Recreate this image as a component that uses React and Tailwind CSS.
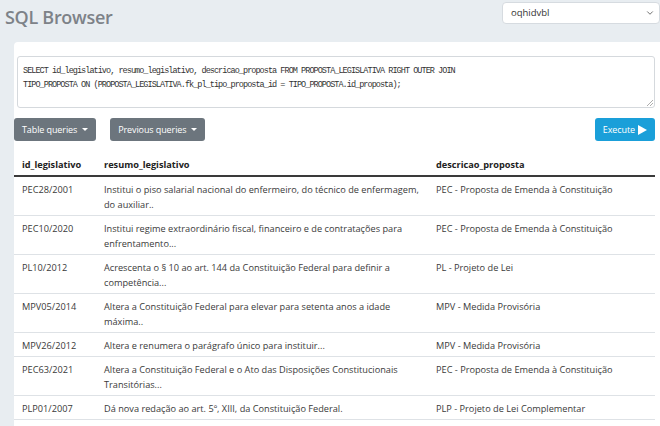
import { ChevronDown } from 'lucide-react'

const rows = [
  { id: 'PEC28/2001', resumo: ['Institui o piso salarial nacional do enfermeiro, do técnico de enfermagem,', 'do auxiliar..'], desc: 'PEC - Proposta de Emenda à Constituição' },
  { id: 'PEC10/2020', resumo: ['Institui regime extraordinário fiscal, financeiro e de contratações para', 'enfrentamento...'], desc: 'PEC - Proposta de Emenda à Constituição' },
  { id: 'PL10/2012', resumo: ['Acrescenta o § 10 ao art. 144 da Constituição Federal para definir a', 'competência...'], desc: 'PL - Projeto de Lei' },
  { id: 'MPV05/2014', resumo: ['Altera a Constituição Federal para elevar para setenta anos a idade', 'máxima..'], desc: 'MPV - Medida Provisória' },
  { id: 'MPV26/2012', resumo: ['Altera e renumera o parágrafo único para instituir...'], desc: 'MPV - Medida Provisória' },
  { id: 'PEC63/2021', resumo: ['Altera a Constituição Federal e o Ato das Disposições Constitucionais', 'Transitórias...'], desc: 'PEC - Proposta de Emenda à Constituição' },
  { id: 'PLP01/2007', resumo: ['Dá nova redação ao art. 5º, XIII, da Constituição Federal.'], desc: 'PLP - Projeto de Lei Complementar' },
]

function DropButton({ label }) {
  return (
    <button className="flex items-center gap-[5px] h-[23px] px-[8px] rounded-[3px] bg-[#6c757d] text-white text-[9px] tracking-[-0.1px]">
      {label}
      <span className="w-0 h-0 border-l-[3px] border-r-[3px] border-t-[3px] border-l-transparent border-r-transparent border-t-white" />
    </button>
  )
}

export default function App() {
  return (
    <div className="w-[660px] h-[426px] overflow-hidden bg-[#e8edf1] font-['Open_Sans',sans-serif] text-[#333]">
      {/* Top bar */}
      <div className="flex items-start justify-between h-[42px]">
        <h1 className="ml-[5px] mt-[4px] text-[18px] font-semibold text-[#7d8288] tracking-[-0.3px]">SQL Browser</h1>
        <div className="mt-[2px] w-[158px] h-[22px] flex items-center justify-between pl-[8px] pr-[4px] bg-white border border-[#d6dbe0] rounded-[4px] text-[9.5px] text-[#333]">
          oqhidvbl
          <ChevronDown className="w-[10px] h-[10px] text-[#555]" strokeWidth={2} />
        </div>
      </div>

      {/* Main panel */}
      <div className="ml-[14px] h-[384px] bg-white rounded-tl-[4px] pt-[14px] pr-[5px]">
        <div className="ml-[3px] h-[52px] border border-[#d5d9dd] rounded-[3px] px-[5px] pt-[7px] relative font-['Liberation_Mono',monospace] text-[8.5px] leading-[14px] tracking-[-0.95px] text-[#333]">
          <div>SELECT id_legislativo, resumo_legislativo, descricao_proposta FROM PROPOSTA_LEGISLATIVA RIGHT OUTER JOIN</div>
          <div>TIPO_PROPOSTA ON (PROPOSTA_LEGISLATIVA.fk_pl_tipo_proposta_id = TIPO_PROPOSTA.id_proposta);</div>
          <svg className="absolute right-[1px] bottom-[1px]" width="6" height="6" viewBox="0 0 6 6">
            <path d="M6 0 L0 6 M6 3 L3 6" stroke="#999" strokeWidth="0.8" />
          </svg>
        </div>

        <div className="flex items-center mt-[10px] h-[23px]">
          <DropButton label="Table queries" />
          <div className="w-[14px]" />
          <DropButton label="Previous queries" />
          <button className="ml-auto flex items-center gap-[3px] h-[23px] px-[8px] rounded-[3px] bg-[#1a9fd9] text-white text-[9px] tracking-[-0.1px]">
            Execute
            <svg width="9" height="10" viewBox="0 0 9 10"><path d="M0 0 L9 5 L0 10 Z" fill="white" /></svg>
          </button>
        </div>

        <table className="mt-[9px] w-[641px] text-[9.2px] text-[#3a3a3a] border-collapse table-fixed">
          <colgroup>
            <col className="w-[82px]" />
            <col className="w-[332px]" />
            <col />
          </colgroup>
          <thead>
            <tr className="border-b-2 border-[#3a3a3a]">
              <th className="text-left font-bold px-[8px] pt-[5px] h-[26px] text-[#222]">id_legislativo</th>
              <th className="text-left font-bold px-[8px] pt-[5px] text-[#222]">resumo_legislativo</th>
              <th className="text-left font-bold px-[8px] pt-[5px] text-[#222]">descricao_proposta</th>
            </tr>
          </thead>
          <tbody>
            {rows.map((r) => (
              <tr key={r.id} className="border-b border-[#dee2e6] align-top">
                <td className="px-[8px] pt-[5px] pb-[3px] leading-[15px]">{r.id}</td>
                <td className="px-[8px] pt-[5px] pb-[3px] leading-[15px] whitespace-nowrap">
                  {r.resumo.map((l) => <div key={l}>{l}</div>)}
                </td>
                <td className="px-[8px] pt-[5px] pb-[3px] leading-[15px] whitespace-nowrap">{r.desc}</td>
              </tr>
            ))}
          </tbody>
        </table>
      </div>
    </div>
  )
}
